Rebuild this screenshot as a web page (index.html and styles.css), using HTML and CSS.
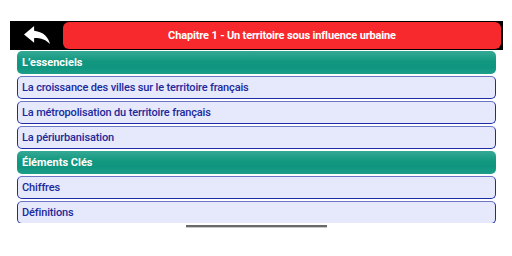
FILE: index.html
```html
<!DOCTYPE html>
<html lang="fr">
<head>
<meta charset="utf-8">
<title>Chapitre 1</title>
<link rel="stylesheet" href="styles.css">
</head>
<body>
<div class="screen">
  <header class="topbar">
    <button class="back" aria-label="Retour">
      <svg width="26" height="18" viewBox="3 5 18 15" preserveAspectRatio="none"><path d="M10 9V5l-7 7 7 7v-4.1c5 0 8.5 1.6 11 5.1-1-5-4-10-11-11z" fill="#fff"/></svg>
    </button>
    <div class="title">Chapitre 1 - Un territoire sous influence urbaine</div>
  </header>
  <div class="list">
    <div class="row section">L’essenciels</div>
    <div class="row item">La croissance des villes sur le territoire français</div>
    <div class="row item">La métropolisation du territoire français</div>
    <div class="row item">La périurbanisation</div>
    <div class="row section">Éléments Clés</div>
    <div class="row item">Chiffres</div>
    <div class="row item">Définitions</div>
  </div>
  <div class="home-bar"><span></span></div>
</div>
</body>
</html>
```
FILE: styles.css
```css
* { box-sizing: border-box; }
html, body { margin: 0; padding: 0; background: #fff; }
body { font-family: Roboto, "Noto Sans", sans-serif; }
.screen { width: 512px; height: 256px; padding-top: 21px; overflow: hidden; }
.topbar {
  margin: 0 9px 0 10px;
  height: 29px;
  background: #000;
  display: flex;
  align-items: stretch;
  padding: 1px 2px 1px 0;
}
.back {
  width: 53px;
  border: 0;
  background: transparent;
  padding: 0 0 1px 0;
  display: flex;
  align-items: center;
  justify-content: center;
}
.back svg { display: block; }
.title {
  flex: 1;
  background: #f8292c;
  border-radius: 6px;
  color: #fff;
  font-weight: 700;
  font-size: 11px;
  letter-spacing: -0.15px;
  display: flex;
  align-items: center;
  justify-content: center;
}
.list {
  margin: 1px 16px 0 17px;
  height: 172px;
  overflow: hidden;
  display: flex;
  flex-direction: column;
  gap: 2px;
}
.row {
  flex: none;
  height: 23px;
  border-radius: 5px;
  font-size: 11px;
  display: flex;
  align-items: center;
  padding-left: 5px;
}
.section {
  background: linear-gradient(#35a995 0%, #12977f 45%, #0f957f 70%, #1d9f8a 100%);
  color: #fff;
  font-weight: 700;
}
.item {
  background: #e6e8fb;
  border: 1px solid #1f2aa5;
  border-top-color: #6c74c4;
  color: #1c2a9c;
  font-weight: 500;
  letter-spacing: -0.15px;
  padding-left: 4px;
}
.home-bar { display: flex; justify-content: center; padding-top: 2px; }
.home-bar span {
  display: block;
  width: 141px;
  height: 2px;
  margin-left: 1px;
  background: #6a6a6a;
  box-shadow: 0 1px 0 #c8c8c8;
}
```
